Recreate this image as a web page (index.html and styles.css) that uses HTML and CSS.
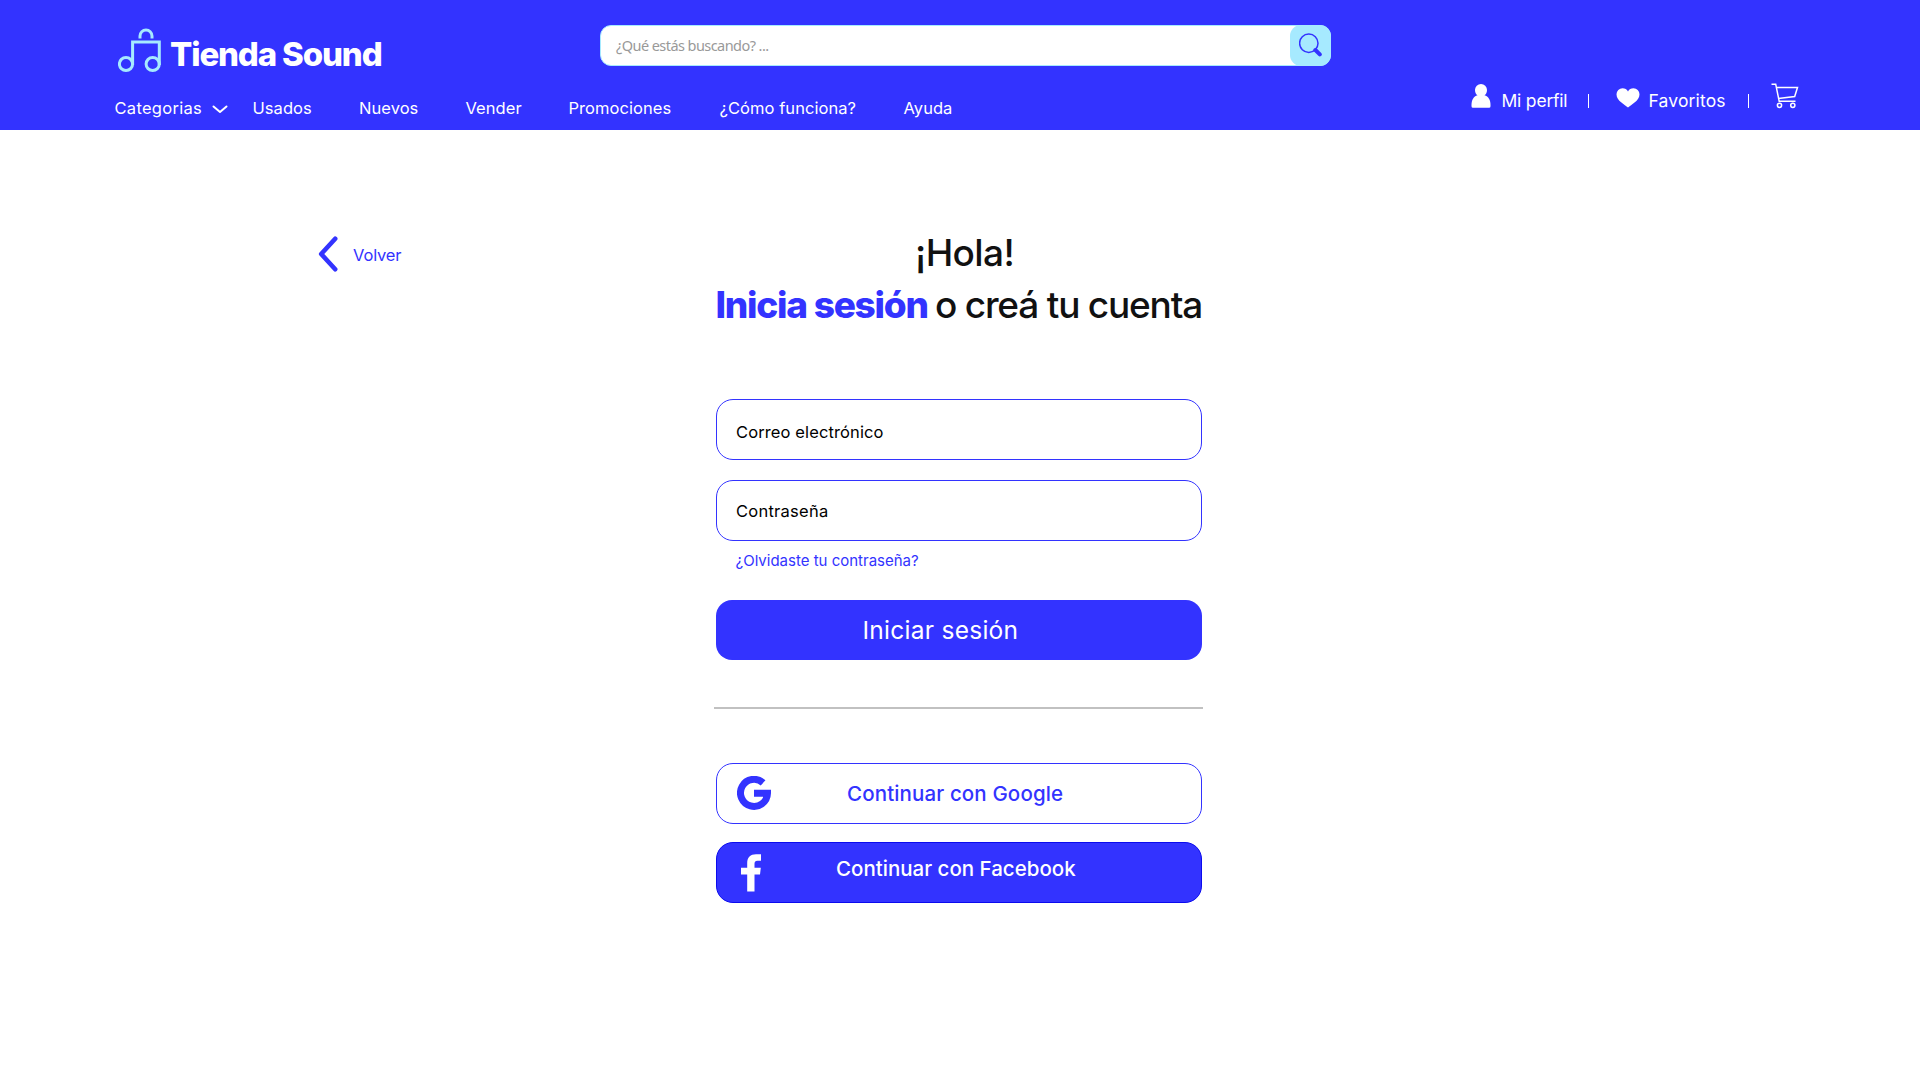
FILE: index.html
```html
<!DOCTYPE html>
<html lang="es">
<head>
<meta charset="utf-8">
<title>Tienda Sound – Iniciar sesión</title>
<link rel="stylesheet" href="styles.css">
</head>
<body>
<header class="header">
  <div class="header-top">
    <a class="logo">
      <svg class="logo-icon" viewBox="0 0 44 46" fill="none" stroke="#a6eaff" stroke-width="3">
        <circle cx="8" cy="36" r="6.6"/><circle cx="34.7" cy="36" r="6.6"/>
        <path d="M14.600 37V14H41.300V37"/>
        <path d="M22 10.500V8a6 6 0 0 1 12 0V10.500"/>
      </svg>
      <span class="logo-name">Tienda Sound</span>
    </a>
    <div class="search">
      <span class="search-text">¿Qué estás buscando? ...</span>
      <button class="search-button" aria-label="Buscar">
        <svg width="24" height="24" viewBox="0 0 24 24" fill="none" stroke="#3333ff">
          <circle cx="9.800" cy="10.300" r="9.200" stroke-width="1.500"/>
          <path d="M16.400 17L20.800 21.400" stroke-width="4" stroke-linecap="round"/>
        </svg>
      </button>
    </div>
  </div>
  <div class="header-bottom">
    <nav class="nav">
      <a class="nav-cat">Categorias</a>
      <svg class="chevron" viewBox="0 0 16 9" fill="none" stroke="#fff" stroke-width="2" stroke-linecap="round" stroke-linejoin="round"><path d="M1.500 1.500L8 7L14.500 1.500"/></svg>
      <a class="nav-usados">Usados</a>
      <a class="nav-nuevos">Nuevos</a>
      <a class="nav-vender">Vender</a>
      <a class="nav-promo">Promociones</a>
      <a class="nav-como">¿Cómo funciona?</a>
      <a class="nav-ayuda">Ayuda</a>
    </nav>
    <div class="user">
      <svg class="icon-user" viewBox="0 0 20 24" fill="#fff"><path d="M10 0a6 6 0 0 0-6 6c0 2.400 1 4.300 2.500 5.300C2.500 12.500.500 16 .500 21v1.200q0 1.500 1.500 1.500h16q1.500 0 1.500-1.500V21c0-5-2-8.500-6-9.700C15 10.300 16 8.400 16 6a6 6 0 0 0-6-6z"/></svg>
      <a class="user-perfil">Mi perfil</a>
      <i class="bar"></i>
      <svg class="icon-heart" viewBox="0 0 24 20" fill="#fff"><path d="M12 19.500C9 16.800.500 13 .500 6.300A6.100 6.100 0 0 1 6.500.300c2.500 0 4.400 1.200 5.500 3.100C13.100 1.500 15 .300 17.500.300a6.100 6.100 0 0 1 6 6C23.500 13 15 16.800 12 19.500z"/></svg>
      <a class="user-fav">Favoritos</a>
      <i class="bar"></i>
      <svg class="icon-cart" viewBox="0 0 28 26" fill="none" stroke="#fff" stroke-width="1.500"><path d="M.500 1.200H4.700L8.200 18.300H24.500M5.600 4.400H26.500L23.700 13.500L7.400 15.400"/><circle cx="8.500" cy="22.300" r="2.100"/><circle cx="21.800" cy="22.300" r="2.100"/></svg>
    </div>
  </div>
</header>
<main class="main">
  <a class="back">
    <svg class="back-icon" viewBox="0 0 20 36" fill="none" stroke="#3333ff" stroke-width="4.600" stroke-linecap="round" stroke-linejoin="round"><path d="M17.200 2.700L3.200 18L17.200 33.300"/></svg>
    <span class="back-text">Volver</span>
  </a>
  <section class="login">
    <h1 class="title"><span class="hello">¡Hola!</span><span class="line2"><b class="strong">Inicia sesión</b><span class="rest">o creá tu cuenta</span></span></h1>
    <div class="field field-mail"><span class="t-mail">Correo electrónico</span></div>
    <div class="field field-pass"><span class="t-pass">Contraseña</span></div>
    <a class="forgot">¿Olvidaste tu contraseña?</a>
    <button class="submit"><span class="t-submit">Iniciar sesión</span></button>
    <hr class="divider">
    <button class="social google">
      <svg class="icon-google" viewBox="0 0 34 34" fill="none" stroke="#3333ff" stroke-width="7"><path d="M26.100 6.900A13.500 13.500 0 1 0 30.500 17.200H17"/></svg>
      <span class="t-google">Continuar con Google</span>
    </button>
    <button class="social facebook">
      <svg class="icon-facebook" viewBox="0 0 20 38" fill="#fff"><path d="M20 .200V6.700H16.500C14 6.700 13.500 8 13.500 10V13.700H19.800L19 20.500H13.500V37.500H6.200V20.500H0V13.700H6.200V9C6.200 3.500 9.500.200 15 .200z"/></svg>
      <span class="t-facebook">Continuar con Facebook</span>
    </button>
  </section>
</main>
</body>
</html>
```
FILE: styles.css
```css
* { box-sizing: border-box; }
body { margin: 0; background: #fff; color: #111; font-family: Inter, "Liberation Sans", sans-serif; }
button { border: 0; padding: 0; background: none; font: inherit; text-align: left; }
svg { display: block; flex: none; }
a, span, b { white-space: nowrap; }

.header { height: 129.500px; background: #3333ff; color: #fff; }
.header-top { display: flex; height: 80px; padding-left: 118px; }
.logo { display: flex; width: 482px; padding-top: 28px; }
.logo-icon { width: 44px; height: 46px; }
.logo-name { margin: 6px 0 0 8px; font-size: 33px; line-height: 40px; font-weight: 800; letter-spacing: -1.150px; }
.search { display: flex; justify-content: space-between; width: 731px; height: 41px; margin-top: 25px; padding-left: 15px; border: 1px solid #a6eaff; border-radius: 11px; background: #fff; }
.search-text { font: 14.500px/39px "Noto Sans", sans-serif; letter-spacing: -0.560px; color: #999; }
.search-button { display: flex; width: 41px; height: 41px; margin: -1px -1px 0 0; padding: 8px 0 0 9px; border-radius: 11px; background: #a6eaff; }

.header-bottom { display: flex; }
.nav { display: flex; align-items: center; width: 1356px; height: 24px; margin-top: 15.500px; padding-left: 114px; font-size: 16.500px; letter-spacing: 0.050px; }
.nav a { flex: none; }
.nav-cat { width: 97.500px; padding-left: 0.500px; letter-spacing: 0.300px; }
.chevron { width: 16px; height: 9px; margin-right: 25px; margin-top: 3px; }
.nav-usados, .nav-nuevos { width: 106.500px; }
.nav-vender { width: 103px; }
.nav-promo { width: 151px; }
.nav-como { width: 184px; }
.user { display: flex; align-items: center; height: 42px; font-size: 17.500px; padding-left: 114.500px; }
.icon-user { width: 20px; height: 24px; margin-top: -11px; }
.user-perfil { width: 86px; margin: -2px 0 0 11px; letter-spacing: -0.200px; }
.bar { flex: none; width: 1.500px; height: 14px; margin-top: -1px; background: #fff; }
.icon-heart { width: 24px; height: 20px; margin: -6px 9px 0 26.500px; }
.user-fav { width: 99px; margin-top: -2px; letter-spacing: 0.150px; }
.icon-cart { width: 28px; height: 26px; margin: -10px 0 0 21.500px; }

.main { display: flex; padding-left: 318px; }
.back { display: flex; width: 396px; padding-top: 106px; color: #3333ff; }
.back-icon { width: 20px; height: 36px; }
.back-text { margin: 7px 0 0 15px; font-size: 16.500px; line-height: 24px; letter-spacing: -0.150px; }
.login { display: flex; flex-direction: column; width: 489px; padding-top: 97px; }
.title { display: flex; flex-direction: column; margin: 0; font-size: 37px; line-height: 52px; font-weight: 500; }
.hello { margin-left: 201px; letter-spacing: -0.600px; }
.line2 { display: flex; padding-left: 1.500px; }
.strong { width: 219.500px; font-weight: 800; letter-spacing: -1.250px; color: #3333ff; }
.rest { letter-spacing: -1.200px; }
.field { width: 486px; height: 61px; margin-left: 2px; padding-left: 19px; border: 1px solid #3333ff; border-radius: 17px; font-size: 16.500px; line-height: 64px; color: #000; }
.field-mail { margin-top: 68.500px; letter-spacing: 0.120px; }
.field-pass { margin-top: 20px; line-height: 60px; letter-spacing: 0.250px; }
.forgot { margin: 8.500px 0 0 21.500px; font-size: 15px; line-height: 22px; color: #3333ff; }
.submit { width: 486px; height: 60px; margin: 28.500px 0 0 2px; padding-left: 146.500px; border-radius: 16px; background: #3333ff; color: #fff; font-size: 24.500px; letter-spacing: 0.270px; }
.divider { width: 489px; height: 2px; margin: 47px 0 0; border: 0; background: #c1c1c1; }
.social { display: flex; align-items: center; width: 486px; height: 61px; margin-left: 2px; border: 1px solid #3333ff; border-radius: 17px; font-size: 20.500px; font-weight: 500; }
.google { margin-top: 53.500px; color: #3333ff; letter-spacing: 0.130px; }
.icon-google { width: 34px; height: 34px; margin: 0 76px 0 20px; }
.facebook { margin-top: 18px; background: #3333ff; border-color: #0b0bee; color: #fff; }
.icon-facebook { width: 20px; height: 38px; margin: 1px 75px 0 24px; }
.t-facebook { margin-top: -7px; }
```
